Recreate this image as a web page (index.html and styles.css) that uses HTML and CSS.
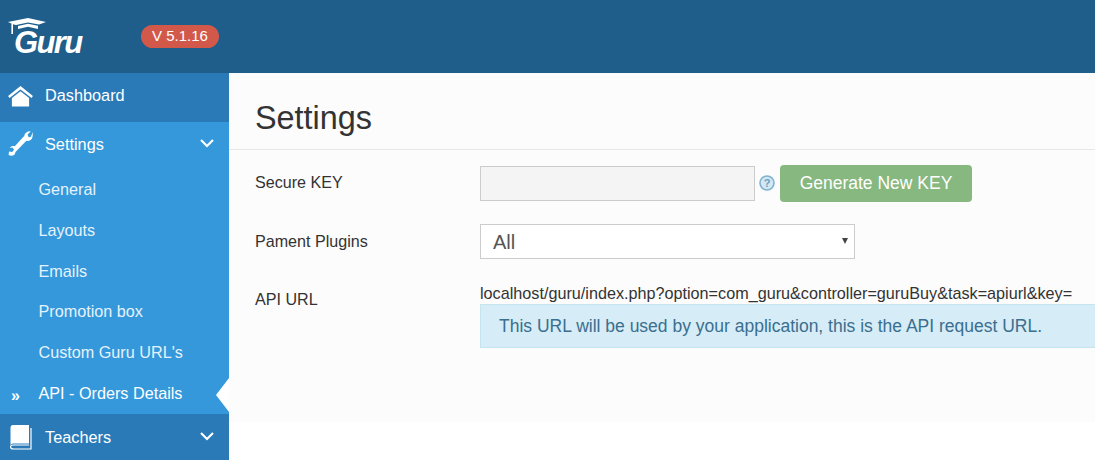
FILE: index.html
```html
<!DOCTYPE html>
<html lang="en">
<head>
<meta charset="utf-8">
<title>Guru Settings</title>
<link rel="stylesheet" href="styles.css">
</head>
<body>
<header class="topbar">
  <div class="logo">
    <svg class="logo-cap" width="39" height="17" viewBox="0 0 39 17"><path fill="#fff" d="M0 4 L20 0 L38 4 L31 6.6 L20 4.6 L8 7 L5 6.2 L5 16 L3.4 16 L3.4 5.6Z"/><path fill="#fff" d="M10 8 L20 5.8 L30 7.8 L30 11 L20 8.8 L10 11Z"/></svg>
    <span class="logo-text">Guru</span>
  </div>
  <span class="version">V 5.1.16</span>
</header>
<div class="layout">
  <nav class="sidebar">
    <a class="nav-item nav-dark nav-dash">
      <svg class="nav-icon" width="25" height="21" viewBox="0 0 26 22"><path fill="#fff" d="M13 0 L26 10.5 L24.5 12.5 L13 3.6 L1.5 12.5 L0 10.5Z"/><path fill="#fff" d="M4 12.6 L13 5.6 L22 12.6 L22 21.5 L4 21.5Z"/></svg>
      <span>Dashboard</span>
    </a>
    <a class="nav-item nav-settings">
      <svg class="nav-icon" width="26" height="26" viewBox="0 0 26 26"><path fill="#fff" d="M25 1 L24.5 6 C24 9 20.5 10.5 18.4 9.8 L7.5 21 C7 25 2.8 25.8 0.6 23.8 L1 20.6 L4.2 21 L6 18.8 L4.6 16.6 L1.5 17 C3 15 5 14.6 6.8 15.2 L16.4 4.8 C16.6 2.4 19.5 0 22.6 0.4 L19.6 3.6 L20.6 6.2 L22.6 6 Z"/></svg>
      <span>Settings</span>
      <svg class="chev" width="14" height="9" viewBox="0 0 14 9"><path fill="none" stroke="#fff" stroke-width="2.2" d="M1 1 L7 7 L13 1"/></svg>
    </a>
    <ul class="subnav">
      <li class="sub-item">General</li>
      <li class="sub-item">Layouts</li>
      <li class="sub-item">Emails</li>
      <li class="sub-item">Promotion box</li>
      <li class="sub-item">Custom Guru URL's</li>
      <li class="sub-item sub-active"><span class="sub-mark">»</span>API - Orders Details<i class="caret"></i></li>
    </ul>
    <a class="nav-item nav-dark nav-teachers">
      <svg class="nav-icon book" width="22" height="25" viewBox="0 0 22 25"><path fill="#fff" d="M3 0 H19 V18.5 H4 C2.5 18.5 1 19 0.5 20 V3 C0.5 1 1.5 0 3 0Z"/><path fill="none" stroke="#fff" stroke-width="1.2" d="M21 3 V24 H4 C1 24 0.5 22.5 0.5 21.5 C0.5 20.5 1.5 20 4 20 H19"/></svg>
      <span>Teachers</span>
      <svg class="chev" width="14" height="9" viewBox="0 0 14 9"><path fill="none" stroke="#fff" stroke-width="2.2" d="M1 1 L7 7 L13 1"/></svg>
    </a>
  </nav>
  <main class="content">
    <div class="panel">
      <h1 class="title">Settings</h1>
      <div class="form">
        <div class="row row-key">
          <label class="label">Secure KEY</label>
          <div class="field">
            <input class="key-input" type="text" disabled>
            <svg class="help" width="16" height="16" viewBox="0 0 16 16"><circle cx="8" cy="8" r="7" fill="#d3e8f3" stroke="#7fb2cf" stroke-width="1.6"/><text x="8" y="12" text-anchor="middle" class="help-q">?</text></svg>
            <button class="generate" type="button">Generate New KEY</button>
          </div>
        </div>
        <div class="row row-plugins">
          <label class="label">Pament Plugins</label>
          <div class="field">
            <div class="select"><span>All</span><i class="select-arrow"></i></div>
          </div>
        </div>
        <div class="row row-api">
          <label class="label api-label">API URL</label>
          <div class="field-col">
            <div class="url">localhost/guru/index.php?option=com_guru&amp;controller=guruBuy&amp;task=apiurl&amp;key=</div>
            <div class="notice">This URL will be used by your application, this is the API request URL.</div>
          </div>
        </div>
      </div>
    </div>
  </main>
</div>
</body>
</html>
```

FILE: styles.css
```css
* { box-sizing: border-box; }
html, body { margin: 0; padding: 0; height: 460px; overflow: hidden; background: #fff; }
body { font-family: "Liberation Sans", Arial, sans-serif; color: #333; font-size: 16px; }

.topbar { height: 73px; background: #1f5e8b; display: flex; align-items: flex-start; }
.logo { position: relative; width: 141px; height: 73px; }
.logo-cap { position: absolute; left: 8px; top: 18px; }
.logo-text { position: absolute; left: 14px; top: 27px; font-size: 31px; line-height: 31px; font-weight: 700; font-style: italic; color: #fff; letter-spacing: -1.6px; }
.version { margin-top: 25px; width: 78px; height: 23px; border-radius: 12px; background: #d2594a; color: #fff; font-size: 15px; line-height: 22px; text-align: center; }

.layout { display: flex; height: 387px; }
.sidebar { width: 229px; flex: none; background: #3498db; display: flex; flex-direction: column; }
.nav-item { display: flex; align-items: center; color: #fff; font-size: 16.3px; position: relative; padding-left: 8px; }
.nav-item span { margin-left: 12px; }
.nav-dark { background: #2a7ab8; }
.nav-dash { height: 49px; padding-bottom: 2px; }
.nav-dash span { margin-bottom: 2px; }
.nav-settings { height: 44px; }
.nav-settings span { margin-left: 11px; margin-top: 1px; }
.nav-teachers { height: 46px; padding-left: 10px; }
.nav-teachers span { margin-left: 13px; margin-top: 1px; }
.nav-icon { flex: none; }
.chev { position: absolute; left: 200px; top: 50%; margin-top: -5px; }
.subnav { list-style: none; margin: 0; padding: 0; height: 248px; }
.sub-item { height: 40.8px; line-height: 41px; padding-left: 38.5px; color: #e6f2fb; font-size: 16.2px; position: relative; }
.sub-item:first-child { margin-top: 3px; }
.sub-active { color: #fff; }
.sub-mark { position: absolute; left: 11px; top: 2px; font-size: 16px; font-weight: 700; }
.caret { position: absolute; right: 0; top: 5px; width: 0; height: 0; border-style: solid; border-width: 17px 13px 17px 0; border-color: transparent #fff transparent transparent; }

.content { flex: 1; min-width: 0; }
.panel { height: 349px; background: #fcfcfc; padding-top: 25px; }
.title { margin: 0; height: 52px; padding-left: 26px; font-size: 32.4px; line-height: 40px; font-weight: 400; color: #333; border-bottom: 1px solid #e8e8e8; }
.form { padding-left: 26px; }
.row { display: flex; }
.label { width: 225px; flex: none; color: #333; font-size: 16.1px; }
.field { display: flex; align-items: center; }
.field-col { flex: 1; min-width: 0; }

.row-key { margin-top: 14px; height: 38px; align-items: center; }
.row-key .label { margin-top: -1px; }
.key-input { width: 275px; height: 35px; background: #f4f4f4; border: 1px solid #ccc; padding: 0; margin: 0; }
.help { margin-left: 4px; }
.help-q { font-family: "Liberation Sans", Arial, sans-serif; font-size: 11px; font-weight: 700; fill: #6a9fbe; }
.generate { margin-left: 5px; width: 192px; height: 37px; background: #87b87f; border: 0; border-radius: 4px; color: #fff; font-family: inherit; font-size: 17.5px; padding: 0; }

.row-plugins { margin-top: 22px; height: 35px; align-items: center; }
.select { width: 375px; height: 35px; border: 1px solid #ccc; background: #fff; position: relative; padding-left: 12px; font-size: 20px; line-height: 34px; color: #555; }
.select-arrow { position: absolute; right: 6px; top: 13px; width: 0; height: 0; border-style: solid; border-width: 6px 3.5px 0; border-color: #444 transparent transparent; }

.row-api { margin-top: 22px; }
.api-label { padding-top: 9px; }
.url { font-size: 16.2px; padding-top: 1px; line-height: 22px; color: #333; white-space: nowrap; }
.notice { height: 44px; background: #d6ecf6; border: 1px solid #c4e4f0; border-right: 0; padding-left: 18px; color: #3a6f8f; font-size: 17.5px; line-height: 42px; white-space: nowrap; }
```
